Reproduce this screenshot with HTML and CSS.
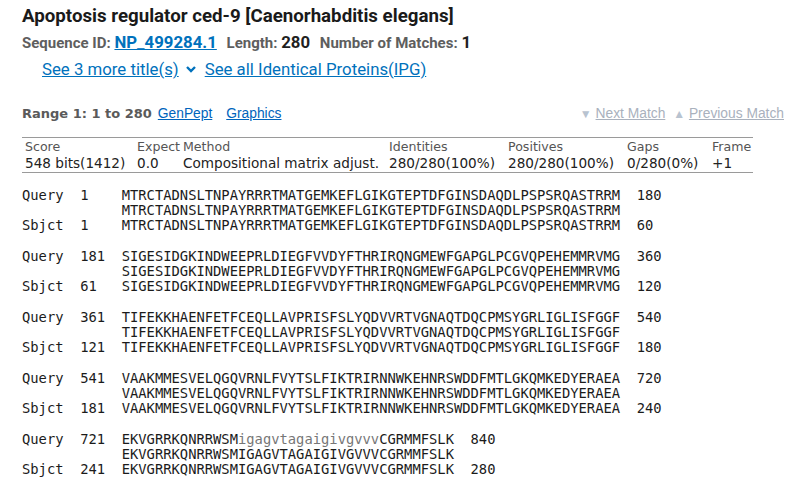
FILE: index.html
```html
<!DOCTYPE html>
<html>
<head>
<meta charset="utf-8">
<link rel="stylesheet" href="styles.css">
</head>
<body>
<div class="page">
  <h1 class="title">Apoptosis regulator ced-9 [Caenorhabditis elegans]</h1>
  <div class="meta">
    <span class="lbl">Sequence ID:</span> <a class="acc" href="#">NP_499284.1</a>
    <span class="lbl sp">Length:</span> <span class="val">280</span>
    <span class="lbl sp">Number of Matches:</span> <span class="val">1</span>
  </div>
  <div class="more">
    <a href="#">See 3 more title(s)</a>
    <svg class="chev" width="12" height="10" viewBox="0 0 12 10"><path d="M2 3 L6 7 L10 3" fill="none" stroke="#0071bc" stroke-width="2.4"/></svg>
    <a href="#">See all Identical Proteins(IPG)</a>
  </div>
  <div class="rangebar">
    <div class="range"><span class="rlbl">Range 1: 1 to 280</span> <a href="#">GenPept</a> <a href="#" class="gr">Graphics</a></div>
    <div class="nav"><span class="tri">▼</span> <a href="#">Next Match</a> <span class="tri tri2">▲</span> <a href="#">Previous Match</a></div>
  </div>
  <div class="stats">
    <div class="h">Score</div><div class="h">Expect</div><div class="h">Method</div><div class="h">Identities</div><div class="h">Positives</div><div class="h">Gaps</div><div class="h">Frame</div>
    <div>548 bits(1412)</div><div>0.0</div><div>Compositional matrix adjust.</div><div>280/280(100%)</div><div>280/280(100%)</div><div>0/280(0%)</div><div>+1</div>
  </div>
  <div class="aln">
    <div class="blk">
      <div class="ln">Query  1    MTRCTADNSLTNPAYRRRTMATGEMKEFLGIKGTEPTDFGINSDAQDLPSPSRQASTRRM  180</div>
      <div class="ln">            MTRCTADNSLTNPAYRRRTMATGEMKEFLGIKGTEPTDFGINSDAQDLPSPSRQASTRRM</div>
      <div class="ln">Sbjct  1    MTRCTADNSLTNPAYRRRTMATGEMKEFLGIKGTEPTDFGINSDAQDLPSPSRQASTRRM  60</div>
    </div>
    <div class="blk">
      <div class="ln">Query  181  SIGESIDGKINDWEEPRLDIEGFVVDYFTHRIRQNGMEWFGAPGLPCGVQPEHEMMRVMG  360</div>
      <div class="ln">            SIGESIDGKINDWEEPRLDIEGFVVDYFTHRIRQNGMEWFGAPGLPCGVQPEHEMMRVMG</div>
      <div class="ln">Sbjct  61   SIGESIDGKINDWEEPRLDIEGFVVDYFTHRIRQNGMEWFGAPGLPCGVQPEHEMMRVMG  120</div>
    </div>
    <div class="blk">
      <div class="ln">Query  361  TIFEKKHAENFETFCEQLLAVPRISFSLYQDVVRTVGNAQTDQCPMSYGRLIGLISFGGF  540</div>
      <div class="ln">            TIFEKKHAENFETFCEQLLAVPRISFSLYQDVVRTVGNAQTDQCPMSYGRLIGLISFGGF</div>
      <div class="ln">Sbjct  121  TIFEKKHAENFETFCEQLLAVPRISFSLYQDVVRTVGNAQTDQCPMSYGRLIGLISFGGF  180</div>
    </div>
    <div class="blk">
      <div class="ln">Query  541  VAAKMMESVELQGQVRNLFVYTSLFIKTRIRNNWKEHNRSWDDFMTLGKQMKEDYERAEA  720</div>
      <div class="ln">            VAAKMMESVELQGQVRNLFVYTSLFIKTRIRNNWKEHNRSWDDFMTLGKQMKEDYERAEA</div>
      <div class="ln">Sbjct  181  VAAKMMESVELQGQVRNLFVYTSLFIKTRIRNNWKEHNRSWDDFMTLGKQMKEDYERAEA  240</div>
    </div>
    <div class="blk">
      <div class="ln">Query  721  EKVGRRKQNRRWSM<span class="low">igagvtagaigivgvvv</span>CGRMMFSLK  840</div>
      <div class="ln">            EKVGRRKQNRRWSMIGAGVTAGAIGIVGVVVCGRMMFSLK</div>
      <div class="ln">Sbjct  241  EKVGRRKQNRRWSMIGAGVTAGAIGIVGVVVCGRMMFSLK  280</div>
    </div>
  </div>
</div>
</body>
</html>
```
FILE: styles.css
```css
* { box-sizing: border-box; }
body {
  margin: 0;
  background: #fff;
  font-family: Roboto, "Liberation Sans", sans-serif;
  color: #212121;
}
.page {
  padding: 4px 0 0 22px;
  width: 796px;
}
.title {
  margin: 0;
  font-size: 18.7px;
  font-weight: 700;
  line-height: 24px;
  color: #1a1a1a;
}
.meta {
  margin-top: 3px;
  font-size: 15px;
  font-weight: 700;
  line-height: 22px;
  color: #5b5b5b;
  white-space: nowrap;
}
.meta .lbl { color: #5e5e5e; }
.meta .sp { margin-left: 6px; }
.meta .acc {
  color: #0071bc;
  font-size: 16.8px;
  text-decoration: underline;
}
.meta .val {
  color: #1f1f1f;
  font-size: 16.8px;
}
.more {
  margin: 5px 0 0 20px;
  font-size: 16.8px;
  line-height: 20px;
  display: flex;
  align-items: center;
  white-space: nowrap;
}
.more a { color: #0071bc; text-decoration: underline; }
.more .chev { margin: 0 8px 0 6px; }
.rangebar {
  margin-top: 24px;
  display: flex;
  justify-content: space-between;
  align-items: baseline;
  width: 762px;
}
.range .rlbl {
  font-family: "DejaVu Sans", Verdana, sans-serif;
  font-weight: 700;
  font-size: 13px;
  color: #5a5a5a;
}
.range a {
  font-family: "Liberation Sans", Arial, sans-serif;
  font-size: 13.8px;
  color: #0064bc;
  text-decoration: underline;
  margin-left: 2px;
}
.range a.gr { margin-left: 10px; }
.nav {
  font-family: "Liberation Sans", Arial, sans-serif;
  font-size: 13.8px;
  color: #b0b8c4;
}
.nav a { color: #a9b1bd; text-decoration: underline; }
.nav .tri { font-size: 12px; color: #b8c3d0; }
.nav .tri2 { margin-left: 4px; }
.stats {
  margin-top: 15px;
  width: 731px;
  display: grid;
  grid-template-columns: 112px 46px 206px 119px 119px 85px 1fr;
  border-top: 1px solid #9a9a9a;
  border-bottom: 1px solid #9a9a9a;
  padding: 1px 0 1px 3px;
  font-family: "DejaVu Sans", Tahoma, sans-serif;
  font-size: 13.6px;
  line-height: 16px;
  color: #222;
  white-space: nowrap;
}
.stats .h { color: #555; font-size: 12.6px; }
.aln {
  margin-top: 15px;
  font-family: "DejaVu Sans Mono", "Liberation Mono", monospace;
  font-size: 13.8px;
  line-height: 15px;
  color: #1b1b1b;
}
.blk {
  margin-bottom: 16px;
}
.ln { white-space: pre; }
.low { color: #777; }
```
